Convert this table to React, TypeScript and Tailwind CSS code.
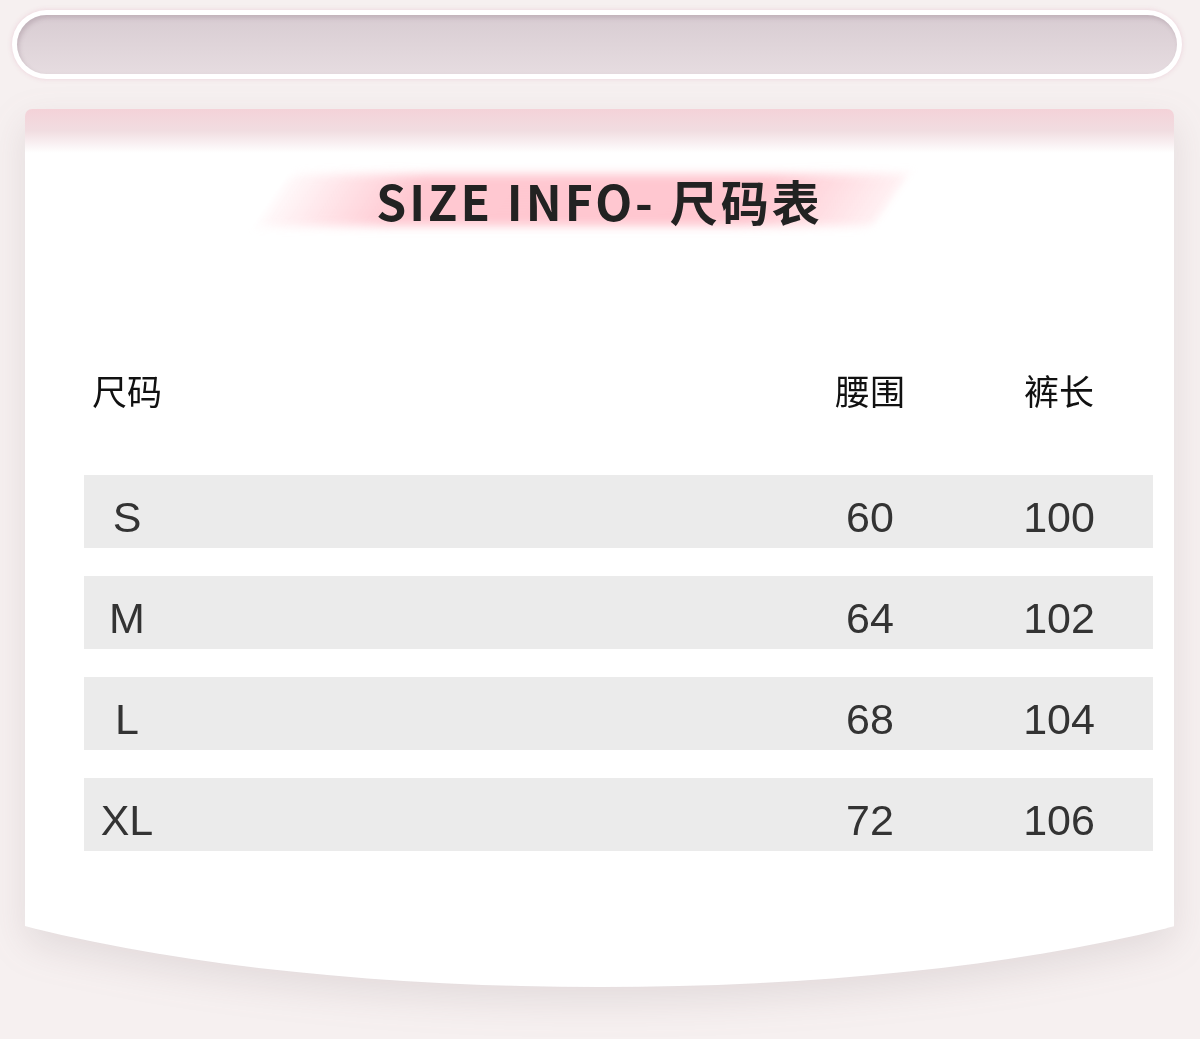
const ROWS = [
  { size: "S", waist: "60", length: "100" },
  { size: "M", waist: "64", length: "102" },
  { size: "L", waist: "68", length: "104" },
  { size: "XL", waist: "72", length: "106" },
];

const CJK = "font-['Noto_Sans_CJK_SC','Noto_Sans',sans-serif]";
const NUM = "font-['Liberation_Sans',Arial,sans-serif]";

function TitleBrush() {
  return (
    <div className="relative mt-[61px] flex h-[60px] items-center justify-center">
      <div className="absolute left-[250px] top-[4px] h-[52px] w-[615px] -skew-x-[34deg] bg-[linear-gradient(90deg,rgba(255,200,208,0.1),#ffc8d1_22%,#ffc6cf_78%,rgba(255,200,208,0.25))] blur-[5px]" />
      <h1
        className={`relative text-[48px] font-bold leading-none tracking-[3px] text-[#222] ${CJK}`}
      >
        SIZE INFO- 尺码表
      </h1>
    </div>
  );
}

function SizeTable() {
  const cols = "grid grid-cols-[86px_1fr_120px_120px] gap-x-[69px] pr-[34px]";
  return (
    <div className="pl-[59px] pr-[21px]">
      <div className={`${cols} mt-[139px] h-[40px] items-center text-[35px] leading-none text-[#111] ${CJK}`}>
        <span className="text-center">尺码</span>
        <span />
        <span className="text-center">腰围</span>
        <span className="text-center">裤长</span>
      </div>
      <div className="mt-[66px] flex flex-col gap-[28px]">
        {ROWS.map((r) => (
          <div
            key={r.size}
            className={`${cols} h-[73px] items-center bg-[#ebebeb] pt-[12px] text-[43px] leading-none text-[#333] ${NUM}`}
          >
            <span className="text-center">{r.size}</span>
            <span />
            <span className="text-center">{r.waist}</span>
            <span className="text-center">{r.length}</span>
          </div>
        ))}
      </div>
    </div>
  );
}

export default function App() {
  return (
    <div className="h-[1039px] w-[1200px] overflow-hidden bg-[#f6f0f0] pl-[12px] pr-[18px] pt-[10px]">
      <div className="h-[69px] rounded-full bg-white p-[5px] shadow-[0_0_5px_rgba(235,205,215,0.9)]">
        <div className="h-full rounded-full bg-[linear-gradient(180deg,#d8ccd2,#e6dce0)] shadow-[inset_2px_3px_4px_rgba(140,115,128,0.3)]" />
      </div>

      <div className="ml-[13px] mt-[30px] w-[1149px] drop-shadow-[0_14px_18px_rgba(110,90,100,0.14)]">
        <div className="h-[817px] overflow-hidden rounded-t-[7px] bg-[linear-gradient(180deg,#f4d2d8_0px,#f1dde1_22px,#ffffff_44px)]">
          <TitleBrush />
          <SizeTable />
        </div>
        <div className="flex h-[61px] justify-center overflow-hidden">
          <div className="-mt-[139px] h-[200px] w-[1600px] shrink-0 rounded-b-[800px_200px] bg-white" />
        </div>
      </div>
    </div>
  );
}
